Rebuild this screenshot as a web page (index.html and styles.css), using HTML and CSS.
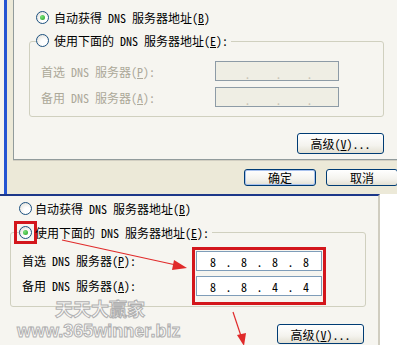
FILE: index.html
```html
<!DOCTYPE html>
<html lang="zh-CN">
<head>
  <meta charset="UTF-8" />
  <title>DNS 服务器地址</title>
  <link rel="stylesheet" href="styles.css">
</head>
<body>
  <div class="shot-top">
    <div class="behind"></div>
    <div class="frame-left"></div>
    <div class="dialog">
      <div class="panel">
        <div class="radio-row">
          <span class="radio on"></span>
          <span>自动获得 DNS 服务器地址(<u>B</u>)</span>
        </div>
        <div class="group">
          <div class="legend">
            <span class="radio"></span>
            <span>使用下面的 DNS 服务器地址(<u>E</u>):</span>
          </div>
          <div class="field">
            <span class="label off">首选 DNS 服务器(<u>P</u>):</span>
            <div class="ip disabled"><span class="oct"></span><span class="dot">.</span><span class="oct"></span><span class="dot">.</span><span class="oct"></span><span class="dot">.</span><span class="oct"></span></div>
          </div>
          <div class="field">
            <span class="label off">备用 DNS 服务器(<u>A</u>):</span>
            <div class="ip disabled"><span class="oct"></span><span class="dot">.</span><span class="oct"></span><span class="dot">.</span><span class="oct"></span><span class="dot">.</span><span class="oct"></span></div>
          </div>
        </div>
        <div class="adv-row">
          <button class="btn adv">高级(<u>V</u>)...</button>
        </div>
      </div>
      <div class="dlg-buttons">
        <button class="btn ok">确定</button>
        <button class="btn">取消</button>
      </div>
    </div>
  </div>

  <div class="shot-bottom">
    <div class="panel2">
      <div class="radio-row small-gap">
        <span class="radio"></span>
        <span>自动获得 DNS 服务器地址(<u>B</u>)</span>
      </div>
      <div class="group group2">
        <div class="legend">
          <span class="mark"><span class="radio on"></span></span>
          <span>使用下面的 DNS 服务器地址(<u>E</u>):</span>
        </div>
        <div class="fields2">
          <div class="labels">
            <span>首选 DNS 服务器(<u>P</u>):</span>
            <span>备用 DNS 服务器(<u>A</u>):</span>
          </div>
          <div class="ips">
            <div class="ip"><span class="oct">8</span><span class="dot">.</span><span class="oct">8</span><span class="dot">.</span><span class="oct">8</span><span class="dot">.</span><span class="oct">8</span></div>
            <div class="ip"><span class="oct">8</span><span class="dot">.</span><span class="oct">8</span><span class="dot">.</span><span class="oct">4</span><span class="dot">.</span><span class="oct">4</span></div>
          </div>
        </div>
      </div>
      <div class="adv-row adv-row2">
        <button class="btn adv">高级(<u>V</u>)...</button>
      </div>
    </div>
    <div class="blank"></div>
  </div>

  <svg class="arrows" width="397" height="345" viewBox="0 0 397 345">
    <line x1="62" y1="240" x2="176" y2="265" stroke="#e02a2a" stroke-width="1.2"/>
    <polygon points="187,268 174,260 172,270" fill="#e02a2a"/>
    <line x1="233" y1="312" x2="241" y2="336" stroke="#e02a2a" stroke-width="1.2"/>
    <polygon points="244,346 237,335 246,333" fill="#e02a2a"/>
  </svg>

  <div class="wm wm-cn">天天大赢家</div>
  <div class="wm wm-url">www.365winner.biz</div>
</body>
</html>
```
FILE: styles.css
```css
* {
  box-sizing: border-box;
}

body {
  margin: 0;
  width: 397px;
  height: 345px;
  overflow: hidden;
  position: relative;
  background: #fff;
  color: #000;
  font-family: "Noto Sans Mono CJK SC", "Noto Sans CJK SC", sans-serif;
  font-size: 12px;
  line-height: 13px;
}

u {
  text-decoration: underline;
  text-underline-offset: 1px;
}

/* top screenshot */
.shot-top {
  display: flex;
  height: 194px;
}

.behind {
  width: 4px;
  background: #f4f3ee;
}

.frame-left {
  width: 3px;
  background: #2454d2;
}

.dialog {
  flex: 1;
  background: #ece9d8;
  padding-left: 6px;
  overflow: hidden;
}

.panel {
  width: 400px;
  height: 160px;
  padding-top: 11px;
  background: #f6f5f0;
  border-left: 1px solid #919b9c;
  border-bottom: 1px solid #919b9c;
  box-shadow: 0 1px 0 #d2cfc2;
}

.radio-row {
  display: flex;
  align-items: center;
  gap: 5px;
  height: 13px;
  margin-left: 22px;
  white-space: nowrap;
}

.radio {
  flex: none;
  position: relative;
  width: 13px;
  height: 13px;
  border-radius: 50%;
  border: 1px solid #1c5180;
  background: radial-gradient(circle at 65% 70%, #fff 30%, #dcdad2);
}

.radio.on::after {
  content: "";
  position: absolute;
  left: 3px;
  top: 3px;
  width: 5px;
  height: 5px;
  border-radius: 50%;
  background: radial-gradient(circle at 35% 35%, #7be27b, #21a121);
}

.group {
  width: 355px;
  margin: 17px 0 0 15px;
  padding-bottom: 9px;
  border: 1px solid #d0d0bf;
  border-radius: 3px;
}

.legend {
  display: inline-flex;
  align-items: center;
  gap: 5px;
  height: 13px;
  margin: -8px 0 0 6px;
  padding-right: 3px;
  background: #f6f5f0;
  white-space: nowrap;
  vertical-align: top;
}

.field {
  display: grid;
  grid-template-columns: 174px 124px;
  align-items: center;
  margin: 6px 0 0 11px;
}

.label {
  white-space: nowrap;
}

.off {
  color: #aca899;
}

.ip {
  display: flex;
  height: 20px;
  padding-left: 4px;
  border: 1px solid #7f9db9;
  background: #fff;
  align-items: center;
}

.ip.disabled {
  background: #efeee4;
  border-color: #8d9ba6;
  color: #c7c3b4;
  align-items: flex-end;
}

.oct {
  width: 24px;
  text-align: center;
}

.dot {
  width: 7px;
  text-align: center;
}

.adv-row {
  display: flex;
  justify-content: flex-end;
  width: 355px;
  margin: 16px 0 0 15px;
}

.btn {
  height: 21px;
  padding: 0;
  border: 1px solid #003c74;
  border-radius: 3px;
  background: linear-gradient(#ffffff, #f4f3ee 60%, #e3e0d3);
  font: inherit;
  color: #000;
}

.adv {
  width: 87px;
}

.dlg-buttons {
  display: flex;
  gap: 10px;
  margin: 9px 0 0 231px;
}

.dlg-buttons .btn {
  width: 72px;
  height: 17px;
  flex: none;
}

.btn.ok {
  box-shadow: inset 0 0 0 1px #a9c2ee;
}

/* bottom screenshot */
.shot-bottom {
  display: flex;
  height: 151px;
}

.panel2 {
  width: 380px;
  padding-top: 6px;
  background: #f6f5f0;
  border-top: 2px solid #1c3789;
  border-right: 2px solid #d0cdc0;
}

.blank {
  flex: 1;
  background: #fff;
}

.radio-row.small-gap {
  gap: 3px;
  margin-left: 19px;
}

.group2 {
  width: 356px;
  margin: 17px 0 0 10px;
  padding-bottom: 5px;
}

.group2 .legend {
  gap: 3px;
  margin: -7px 0 0 8px;
}

.mark {
  display: flex;
  outline: 3px solid #d3161c;
  outline-offset: 2px;
}

.fields2 {
  display: flex;
  margin: 5px 0 0 11px;
}

.labels {
  display: flex;
  flex-direction: column;
  gap: 5px;
  width: 174px;
}

.labels span {
  height: 20px;
  line-height: 20px;
  white-space: nowrap;
}

.ips {
  display: flex;
  flex-direction: column;
  gap: 5px;
  width: 126px;
  padding-bottom: 5px;
  outline: 3px solid #d3161c;
  outline-offset: 1px;
}

.adv-row2 {
  width: 356px;
  margin: 17px 0 0 10px;
  padding-right: 2px;
}

.adv-row2 .btn {
  height: 20px;
}

/* annotations drawn over the screenshots */
.arrows {
  position: absolute;
  left: 0;
  top: 0;
  pointer-events: none;
}

.wm {
  position: absolute;
  font-weight: bold;
  font-size: 18px;
  line-height: 18px;
  color: rgba(255, 255, 255, 0.6);
  -webkit-text-stroke: 1px #b0b0b0;
  white-space: nowrap;
}

.wm-cn {
  left: 55px;
  top: 299px;
  font-family: "Noto Sans CJK SC", sans-serif;
}

.wm-url {
  left: 17px;
  top: 322px;
  font-family: "Liberation Sans", sans-serif;
}
```
